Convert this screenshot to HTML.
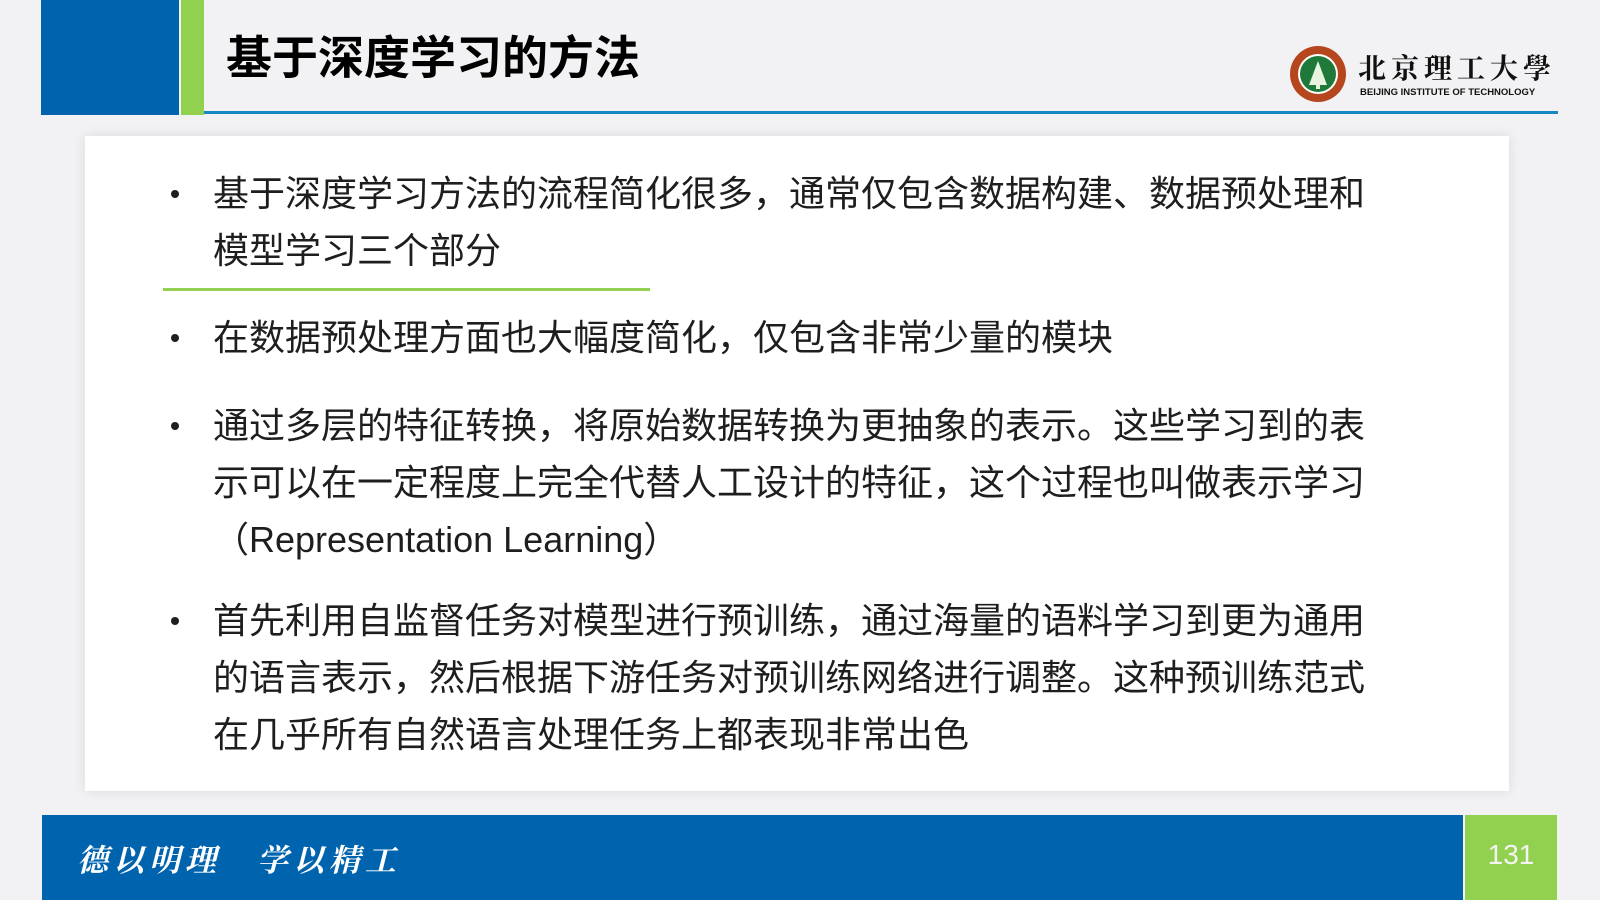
<!DOCTYPE html>
<html><head><meta charset="utf-8"><style>
body{margin:0;width:1600px;height:900px;overflow:hidden;background:#f2f2f4;position:relative;font-family:"Liberation Sans","Noto Sans CJK SC",sans-serif}
.a{position:absolute}
.b{position:absolute;left:213px;font-size:36px;line-height:57px;color:#1e1e1e;white-space:nowrap}
.d{position:absolute;left:171px;width:8px;height:8px;border-radius:50%;background:#1e1e1e}
</style></head><body>
<div class="a" style="left:41px;top:0;width:138px;height:115px;background:#0063ae"></div>
<div class="a" style="left:181px;top:0;width:23px;height:115px;background:#92d050"></div>
<div class="a" style="left:204px;top:111px;width:1354px;height:3px;background:#1788c4"></div>
<div class="a" style="left:226px;top:28px;font-size:46px;font-weight:bold;color:#000;line-height:60px">基于深度学习的方法</div>
<svg class="a" style="left:1289px;top:45px" width="58" height="58" viewBox="0 0 58 58"><circle cx="29" cy="29" r="28" fill="#b5461e"/><circle cx="29" cy="29" r="20" fill="#fff"/><circle cx="29" cy="29" r="18" fill="#1f7a3a"/><path d="M29 16 L20 40 H38 Z" fill="#e8f3e0"/><rect x="27" y="38" width="4" height="6" fill="#e8f3e0"/></svg>
<div class="a" style="left:1358px;top:50px;font-size:28px;font-weight:bold;color:#111;letter-spacing:5px;font-family:'Noto Serif CJK SC',serif;line-height:34px">北京理工大學</div>
<div class="a" style="left:1360px;top:87px;font-size:9.5px;color:#111;line-height:11px;font-weight:bold">BEIJING INSTITUTE OF TECHNOLOGY</div>
<div class="a" style="left:85px;top:136px;width:1424px;height:655px;background:#fff;box-shadow:0 0 12px rgba(0,0,0,0.1)"></div>
<div class="d" style="top:190px"></div>
<div class="b" style="top:165px">基于深度学习方法的流程简化很多，通常仅包含数据构建、数据预处理和<br>模型学习三个部分</div>
<div class="a" style="left:163px;top:288px;width:487px;height:3px;background:#92d050"></div>
<div class="d" style="top:334px"></div>
<div class="b" style="top:309px">在数据预处理方面也大幅度简化，仅包含非常少量的模块</div>
<div class="d" style="top:422px"></div>
<div class="b" style="top:397px">通过多层的特征转换，将原始数据转换为更抽象的表示。这些学习到的表<br>示可以在一定程度上完全代替人工设计的特征，这个过程也叫做表示学习<br>（Representation Learning）</div>
<div class="d" style="top:617px"></div>
<div class="b" style="top:592px">首先利用自监督任务对模型进行预训练，通过海量的语料学习到更为通用<br>的语言表示，然后根据下游任务对预训练网络进行调整。这种预训练范式<br>在几乎所有自然语言处理任务上都表现非常出色</div>
<div class="a" style="left:42px;top:815px;width:1421px;height:85px;background:#0063ae"></div>
<div class="a" style="left:1465px;top:815px;width:92px;height:85px;background:#92d050"></div>
<div class="a" style="left:1465px;top:835px;width:92px;text-align:center;font-size:28px;color:#f4f4f4;line-height:40px">131</div>
<div class="a" style="left:77px;top:838px;font-size:31px;color:#fff;font-weight:bold;font-style:italic;line-height:40px;white-space:nowrap;letter-spacing:5px;font-family:'Noto Serif CJK SC',serif">德以明理　学以精工</div>
</body></html>
